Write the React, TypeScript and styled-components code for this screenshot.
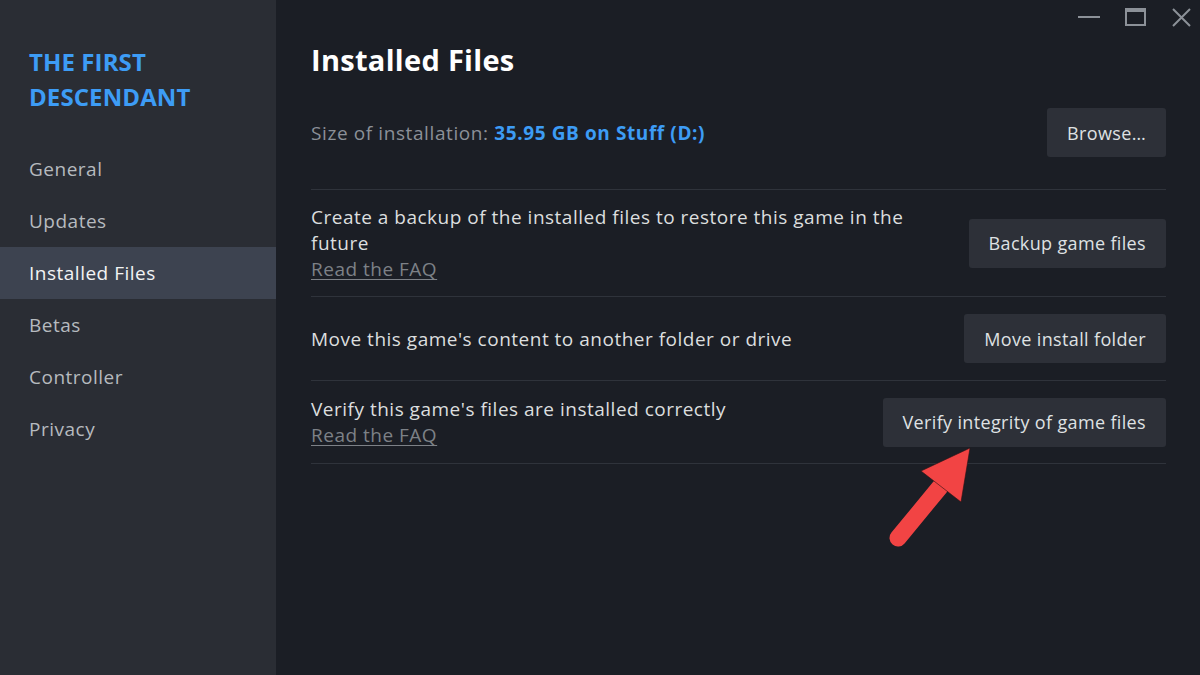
import React from "react";
import styled, { createGlobalStyle } from "styled-components";

const Global = createGlobalStyle`
  html, body { margin: 0; padding: 0; background: #1b1e25; }
  body { font-family: "Open Sans", "Noto Sans", "Liberation Sans", sans-serif; }
  * { box-sizing: border-box; }
`;

const Window = styled.div`
  position: relative;
  width: 1200px;
  height: 675px;
  display: flex;
  overflow: hidden;
  background: #1b1e25;
`;

const Sidebar = styled.aside`
  width: 276px;
  flex: none;
  background: #2a2d34;
  display: flex;
  flex-direction: column;
  padding-top: 44px;
`;

const GameTitle = styled.h1`
  margin: 0 0 29px;
  padding: 0 29px;
  font-size: 24px;
  line-height: 35px;
  font-weight: 700;
  color: #3d9cf5;
  letter-spacing: 0.1px;
`;

const Nav = styled.nav`
  display: flex;
  flex-direction: column;
`;

const NavItem = styled.div<{ $active?: boolean }>`
  height: 52px;
  display: flex;
  align-items: center;
  padding: 0 29px;
  font-size: 19px;
  letter-spacing: 0.5px;
  color: ${(p) => (p.$active ? "#f2f3f4" : "#b6babf")};
  background: ${(p) => (p.$active ? "#3d4350" : "transparent")};
`;

const Main = styled.main`
  flex: 1;
  padding: 42px 34px 0 35px;
  display: flex;
  flex-direction: column;
`;

const Heading = styled.h2`
  margin: 0;
  font-size: 29px;
  line-height: 36px;
  font-weight: 700;
  letter-spacing: 0.3px;
  color: #ffffff;
  height: 50px;
`;

const Row = styled.div<{ $pt?: number; $pb?: number }>`
  display: flex;
  align-items: center;
  justify-content: space-between;
  gap: 24px;
  padding: ${(p) => p.$pt ?? 17}px 0 ${(p) => p.$pb ?? 17}px;
  border-bottom: 1px solid #2f333b;
`;

const TextBlock = styled.div`
  flex: 1;
  display: flex;
  flex-direction: column;
  font-size: 19px;
  letter-spacing: 0.5px;
  line-height: 26px;
  color: #dcdedf;
`;

const SizeLabel = styled.div`
  font-size: 19px;
  letter-spacing: 0.6px;
  line-height: 26px;
  color: #8b9098;
`;

const SizeValue = styled.span`
  color: #3d9cf5;
  font-weight: 700;
`;

const FaqLink = styled.a`
  color: #7d8187;
  text-decoration: underline;
  text-underline-offset: 3px;
  cursor: pointer;
  align-self: flex-start;
`;

const Button = styled.button`
  flex: none;
  height: 49px;
  padding: 0 20px;
  border: none;
  border-radius: 3px;
  background: #2d3038;
  color: #dfe1e3;
  font-family: inherit;
  font-size: 18px;
  letter-spacing: 0.35px;
  cursor: pointer;
`;

const Controls = styled.div`
  position: absolute;
  top: 0;
  right: 0;
  height: 34px;
  padding-right: 7px;
  display: flex;
  align-items: center;
  gap: 22px;
`;

const ControlBtn = styled.div`
  width: 24px;
  height: 34px;
  display: flex;
  align-items: center;
  justify-content: center;
  color: #8c9198;
`;

const ArrowOverlay = styled.svg`
  position: absolute;
  left: 0;
  top: 0;
  pointer-events: none;
`;

export default function App() {
  return (
    <>
      <Global />
      <Window>
        <Sidebar>
          <GameTitle>
            THE FIRST
            <br />
            DESCENDANT
          </GameTitle>
          <Nav>
            <NavItem>General</NavItem>
            <NavItem>Updates</NavItem>
            <NavItem $active>Installed Files</NavItem>
            <NavItem>Betas</NavItem>
            <NavItem>Controller</NavItem>
            <NavItem>Privacy</NavItem>
          </Nav>
        </Sidebar>
        <Main>
          <Heading>Installed Files</Heading>
          <Row $pt={16} $pb={32}>
            <SizeLabel>
              Size of installation: <SizeValue>35.95 GB on Stuff (D:)</SizeValue>
            </SizeLabel>
            <Button>Browse…</Button>
          </Row>
          <Row $pt={14} $pb={14}>
            <TextBlock>
              <span>Create a backup of the installed files to restore this game in the future</span>
              <FaqLink>Read the FAQ</FaqLink>
            </TextBlock>
            <Button>Backup game files</Button>
          </Row>
          <Row>
            <TextBlock>
              <span>Move this game's content to another folder or drive</span>
            </TextBlock>
            <Button>Move install folder</Button>
          </Row>
          <Row $pt={15} $pb={15}>
            <TextBlock>
              <span>Verify this game's files are installed correctly</span>
              <FaqLink>Read the FAQ</FaqLink>
            </TextBlock>
            <Button>Verify integrity of game files</Button>
          </Row>
        </Main>
        <Controls>
          <ControlBtn>
            <svg width="22" height="4" viewBox="0 0 22 4">
              <rect x="0" y="1" width="22" height="2" fill="currentColor" />
            </svg>
          </ControlBtn>
          <ControlBtn>
            <svg width="21" height="18" viewBox="0 0 21 18">
              <rect x="1" y="1" width="19" height="16" fill="none" stroke="currentColor" strokeWidth="2" />
              <rect x="1" y="1" width="19" height="3" fill="currentColor" />
            </svg>
          </ControlBtn>
          <ControlBtn>
            <svg width="19" height="19" viewBox="0 0 19 19">
              <path d="M1 1 L18 18 M18 1 L1 18" stroke="currentColor" strokeWidth="2" />
            </svg>
          </ControlBtn>
        </Controls>
        <ArrowOverlay width="1200" height="675" viewBox="0 0 1200 675">
          <g stroke="#2a1214" strokeWidth="1" strokeOpacity="0.6">
            <line x1="898" y1="538" x2="940" y2="487" stroke="#f24444" strokeWidth="17" strokeLinecap="round" strokeOpacity="1" />
            <polygon points="970,448 921,471 961,502" fill="#f24444" />
          </g>
        </ArrowOverlay>
      </Window>
    </>
  );
}
